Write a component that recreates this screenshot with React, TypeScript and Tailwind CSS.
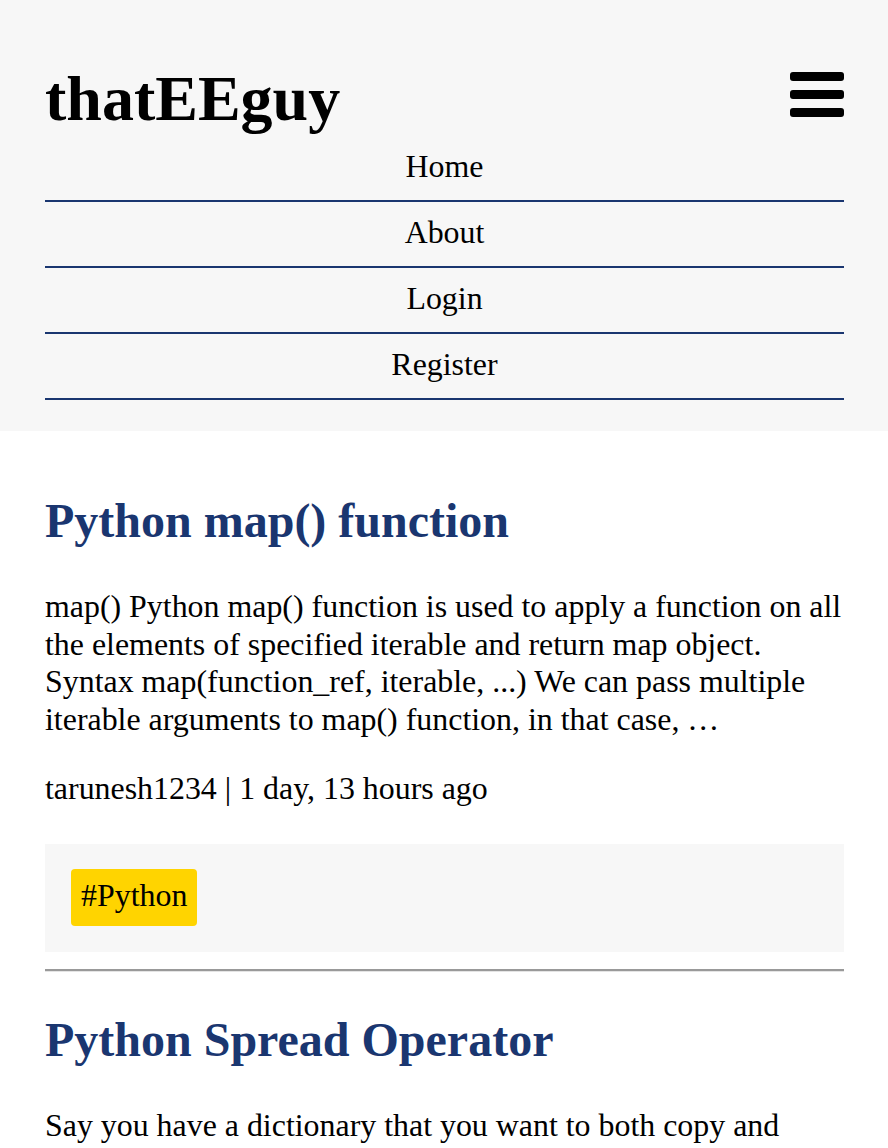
const navItems = ['Home', 'About', 'Login', 'Register']

type Post = {
  title: string
  excerpt: string
  author?: string
  when?: string
  tags?: string[]
}

const posts: Post[] = [
  {
    title: 'Python map() function',
    excerpt:
      'map() Python map() function is used to apply a function on all the elements of specified iterable and return map object. Syntax map(function_ref, iterable, ...) We can pass multiple iterable arguments to map() function, in that case, \u2026',
    author: 'tarunesh1234',
    when: '1 day, 13 hours ago',
    tags: ['Python'],
  },
  {
    title: 'Python Spread Operator',
    excerpt:
      'Say you have a dictionary that you want to both copy and update with new values, the spread operator lets you do it in a single line.',
  },
]

function MenuIcon() {
  return (
    <svg width="54" height="45" viewBox="0 0 54 45" className="mt-[10px]">
      <rect x="0" y="0" width="54" height="9" rx="3" fill="#000" />
      <rect x="0" y="18" width="54" height="9" rx="3" fill="#000" />
      <rect x="0" y="36" width="54" height="9" rx="3" fill="#000" />
    </svg>
  )
}

function PostCard({ post, first }: { post: Post; first: boolean }) {
  return (
    <article className={first ? 'mt-[62px]' : 'mt-[40px]'}>
      <h2 className="text-[48px] font-bold leading-[55px] text-[#1a3670]">{post.title}</h2>
      <p className="mt-[40px] leading-[37.5px]">{post.excerpt}</p>
      {post.author && (
        <p className="mt-[32px] leading-[37.5px]">
          {post.author} | {post.when}
        </p>
      )}
      {post.tags && (
        <div className="mt-[36px] bg-[#f7f7f7] pt-[25px] pb-[26px] pl-[26px] flex gap-3">
          {post.tags.map((tag) => (
            <span key={tag} className="rounded-[4px] bg-[#ffd400] px-[10px] pt-[8px] pb-[12px] leading-[37px]">
              #{tag}
            </span>
          ))}
        </div>
      )}
      {post.tags && (
        <div className="mt-[17px]">
          <div className="h-[2px] bg-[#999999]" />
          <div className="h-px bg-[#e4e4e4]" />
        </div>
      )}
    </article>
  )
}

export default function App() {
  return (
    <div className="min-h-[1148px] bg-white text-black text-[31.9px] font-['Liberation_Serif',serif]">
      <header className="bg-[#f7f7f7] pl-[45px] pr-[44px] pt-[62px] pb-[31px]">
        <div className="flex items-start justify-between">
          <h1 className="text-[64px] font-bold leading-[74px]">thatEEguy</h1>
          <MenuIcon />
        </div>
        <nav className="flex flex-col">
          {navItems.map((item) => (
            <a
              key={item}
              href="#"
              className="block border-b-2 border-[#1a3670] pt-[12px] pb-[15px] text-center leading-[37px]"
            >
              {item}
            </a>
          ))}
        </nav>
      </header>

      <main className="pl-[45px] pr-[44px] pb-10">
        {posts.map((post, i) => (
          <PostCard key={post.title} post={post} first={i === 0} />
        ))}
      </main>
    </div>
  )
}
